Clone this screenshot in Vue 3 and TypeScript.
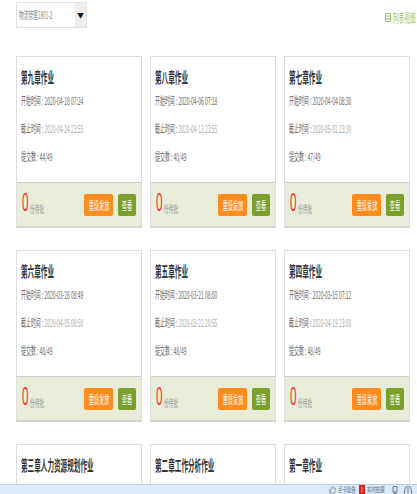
<script setup lang="ts">
interface Work {
  title: string
  start?: string
  end?: string
  submitted?: string
}

// the last row runs under the status bar, only its titles are in view
const works: Work[] = [
  { title: '第九章作业', start: '2020-04-18 07:24', end: '2020-04-24 23:55', submitted: '44/49' },
  { title: '第八章作业', start: '2020-04-06 07:18', end: '2020-04-13 23:55', submitted: '40/49' },
  { title: '第七章作业', start: '2020-04-04 08:30', end: '2020-05-02 23:30', submitted: '47/49' },
  { title: '第六章作业', start: '2020-03-28 08:49', end: '2020-04-05 08:50', submitted: '48/49' },
  { title: '第五章作业', start: '2020-03-21 08:00', end: '2020-03-22 20:55', submitted: '48/49' },
  { title: '第四章作业', start: '2020-03-15 07:12', end: '2020-04-19 23:00', submitted: '48/49' },
  { title: '第三章人力资源规划作业' },
  { title: '第二章工作分析作业' },
  { title: '第一章作业' },
]
</script>

<template>
  <div class="page">
    <div class="toolbar">
      <div class="class-select">
        <span class="select-text"><span class="sq">物流管理1801-2</span></span>
        <span class="select-arrow">▼</span>
      </div>
      <a class="view-link">
        <svg class="list-icon" width="6" height="9" viewBox="0 0 6 9">
          <path d="M0.5 0.5H5.5V8.5H0.5ZM0.5 3H5.5M0.5 6H5.5" fill="none" stroke="#9cc26a" stroke-width="1" />
        </svg>
        <span class="sq">列表视图</span>
      </a>
    </div>

    <div class="grid">
      <div v-for="work in works" :key="work.title" class="card">
        <div class="card-body">
          <h3 class="card-title"><span class="sq">{{ work.title }}</span></h3>
          <template v-if="work.start">
            <p class="meta"><span class="sq">开始时间 : {{ work.start }}</span></p>
            <p class="meta"><span class="sq">截止时间 : <em>{{ work.end }}</em></span></p>
            <p class="meta"><span class="sq">提交数 : {{ work.submitted }}</span></p>
          </template>
        </div>
        <div v-if="work.start" class="card-foot">
          <span class="count"><span class="sq">0</span></span>
          <span class="pending"><span class="sq">份待批</span></span>
          <button class="btn btn-orange"><span class="sq-c">重设发放</span></button>
          <button class="btn btn-green"><span class="sq-c">查看</span></button>
        </div>
      </div>
    </div>

    <div class="status-bar">
      <svg class="thumb" width="7" height="9" viewBox="0 0 8 9">
        <path d="M0.5 4.5H2V8.5H0.5ZM2 4.5L4 0.5Q5 0.7 4.6 3H7.5L6.5 8.5H2" fill="none" stroke="#7f8fa6" stroke-width="0.8" />
      </svg>
      <span class="status-text"><span class="sq">点卡验告</span></span>
      <span class="alert-box">!</span>
      <span class="status-text"><span class="sq">实时拍摄</span></span>
      <svg class="tool-icon" width="6" height="8" viewBox="0 0 6 8">
        <path d="M1 0.5H5V6H1ZM2 6V7.5H4V6" fill="none" stroke="#5f6f86" stroke-width="0.9" />
      </svg>
      <svg class="tool-icon" width="8" height="8" viewBox="0 0 8 8">
        <path d="M0.5 7.5V4A3.5 3.5 0 0 1 7.5 4V7.5M4 2V7.5" fill="none" stroke="#5f6f86" stroke-width="0.9" />
      </svg>
    </div>
  </div>
</template>

<style>
html,
body {
  margin: 0;
  overflow: hidden;
}
</style>

<style scoped>
.page {
  position: relative;
  width: 417px;
  height: 494px;
  overflow: hidden;
  background: #fff;
  font-family: "Noto Sans CJK SC", "Liberation Sans", sans-serif;
}

/* the whole reference is squeezed sideways, so text is narrowed with this */
.sq {
  display: inline-block;
  transform: scaleX(0.47);
  transform-origin: left center;
  white-space: nowrap;
}

.sq-c {
  flex: none;
  transform: scaleX(0.47);
  white-space: nowrap;
}

.toolbar {
  display: flex;
  justify-content: space-between;
  align-items: flex-start;
  height: 56px;
  padding: 2px 2px 0 16px;
  box-sizing: border-box;
}

.class-select {
  display: flex;
  width: 71px;
  height: 26px;
  border: 1px solid #e2e2e2;
  box-sizing: border-box;
}

.select-text {
  flex: 1;
  min-width: 0;
  padding-left: 2px;
  font-size: 10px;
  line-height: 24px;
  color: #888;
}

.select-arrow {
  flex: none;
  width: 11px;
  background: #eee;
  font-size: 7px;
  line-height: 24px;
  text-align: center;
  color: #111;
}

.view-link {
  display: flex;
  align-items: center;
  gap: 2px;
  width: 30px;
  height: 12px;
  margin-top: 9px;
  font-size: 12px;
  color: #9cc26a;
}

.list-icon {
  flex: none;
}

.grid {
  display: grid;
  grid-template-columns: repeat(3, 126px);
  column-gap: 8px;
  row-gap: 22px;
  padding-left: 16px;
}

.card {
  display: flex;
  flex-direction: column;
  height: 172px;
  border: 1px solid #ddd;
  border-bottom: 2px solid #d6d6d6;
  box-sizing: border-box;
}

.card-body {
  flex: 1;
  padding: 12px 4px 0;
}

.card-title {
  margin: 0 0 8px;
  height: 16px;
  font-size: 14.5px;
  line-height: 16px;
  font-weight: 700;
  color: #333;
}

.card-title .sq {
  transform: scaleX(0.455);
}

.meta {
  margin: 0 0 14px;
  height: 14px;
  font-size: 11px;
  line-height: 14px;
  color: #666;
}

.meta .sq {
  transform: scaleX(0.45);
}

.meta em {
  font-style: normal;
  color: #aaa;
}

.card-foot {
  display: flex;
  align-items: center;
  height: 44px;
  padding: 0 5px;
  box-sizing: border-box;
  background: #e8ecd9;
  border-top: 1px solid #ccc;
}

.count {
  width: 8px;
  font-family: "Liberation Sans", sans-serif;
  font-size: 25px;
  line-height: 22px;
  color: #f33;
  margin-bottom: 6px;
}

.pending {
  flex: 1;
  align-self: flex-end;
  margin-bottom: 11px;
  font-size: 10px;
  line-height: 12px;
  color: #999;
}

.btn {
  display: flex;
  justify-content: center;
  align-items: center;
  height: 22px;
  border: 0;
  border-radius: 2px;
  padding: 0;
  font: inherit;
  font-size: 11px;
  color: #fff;
}

.btn-orange {
  width: 29px;
  background: #ff8c1e;
}

.btn-green {
  width: 18px;
  margin-left: 5px;
  background: #7a9f2c;
}

.status-bar {
  position: absolute;
  left: 0;
  right: 0;
  bottom: 0;
  height: 10px;
  display: flex;
  align-items: center;
  justify-content: flex-end;
  padding-right: 5px;
  box-sizing: border-box;
  background: #dce9f8;
  border-top: 1px solid #bccfe6;
}

.status-text {
  width: 19px;
  height: 9px;
  margin-left: 2px;
  font-size: 6.5px;
  line-height: 8px;
  color: #4a6a90;
}

.status-text .sq {
  transform: scaleX(0.68);
}

.alert-box {
  width: 6px;
  height: 9px;
  margin-left: 2px;
  background: #e02020;
  color: #fff;
  font-size: 6.5px;
  line-height: 9px;
  text-align: center;
}

.tool-icon {
  flex: none;
  margin-left: 6px;
}
</style>
